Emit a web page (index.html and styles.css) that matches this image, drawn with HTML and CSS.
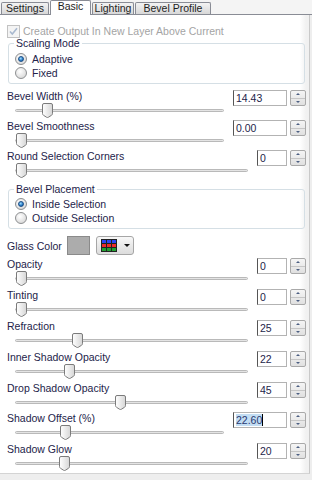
FILE: index.html
```html
<!DOCTYPE html>
<html lang="en">
<head>
<meta charset="UTF-8">
<meta name="viewport" content="width=device-width, initial-scale=1.0">
<title>Glass Bevel</title>
<link rel="stylesheet" href="styles.css">
</head>
<body>
    <svg class="defs" width="0" height="0">
        <defs>
            <linearGradient id="thumbFill" x1="0" y1="0" x2="1" y2="0">
                <stop offset="0" stop-color="#ffffff"/>
                <stop offset="1" stop-color="#d6d6d6"/>
            </linearGradient>
            <symbol id="thumb" viewBox="0 0 11 15">
                <path d="M0.5 2 Q0.5 0.5 2 0.5 H9 Q10.5 0.5 10.5 2 V10.5 Q10.5 11.5 9.5 12.3 L6.3 14.3 Q5.5 14.7 4.7 14.3 L1.5 12.3 Q0.5 11.5 0.5 10.5 Z" fill="url(#thumbFill)" stroke="#7b7b7b"/>
            </symbol>
        </defs>
    </svg>

    <div class="tabs">
        <div class="tab t-settings">Settings</div>
        <div class="tab t-basic active">Basic</div>
        <div class="tab t-lighting">Lighting</div>
        <div class="tab t-profile">Bevel Profile</div>
    </div>

    <div class="panel">
        <div class="check-row">
            <svg class="check" width="13" height="13" viewBox="0 0 13 13">
                <rect x="0.5" y="0.5" width="12" height="12" fill="#f4f4f4" stroke="#c2c2c2"/>
                <path d="M3 6.5 L5.3 9 L10 3.3" fill="none" stroke="#a9b9cf" stroke-width="1.6"/>
            </svg>
            <span>Create Output In New Layer Above Current</span>
        </div>

        <fieldset class="group">
            <legend>Scaling Mode</legend>
            <div class="radio-row"><span class="radio on"></span>Adaptive</div>
            <div class="radio-row"><span class="radio"></span>Fixed</div>
        </fieldset>

        <div class="param">
            <div class="param-main">
                <div class="label">Bevel Width (%)</div>
                <div class="slider"><div class="track"></div><svg class="thumb" style="left:27px"><use href="#thumb"/></svg></div>
            </div>
            <div class="value">
                <div class="field wide">14.43</div>
                <div class="spin"><span class="up"></span><span class="down"></span></div>
            </div>
        </div>

        <div class="param">
            <div class="param-main">
                <div class="label">Bevel Smoothness</div>
                <div class="slider"><div class="track"></div><svg class="thumb" style="left:1px"><use href="#thumb"/></svg></div>
            </div>
            <div class="value">
                <div class="field wide">0.00</div>
                <div class="spin"><span class="up"></span><span class="down"></span></div>
            </div>
        </div>

        <div class="param">
            <div class="param-main">
                <div class="label">Round Selection Corners</div>
                <div class="slider"><div class="track"></div><svg class="thumb" style="left:1px"><use href="#thumb"/></svg></div>
            </div>
            <div class="value">
                <div class="field">0</div>
                <div class="spin"><span class="up"></span><span class="down"></span></div>
            </div>
        </div>

        <fieldset class="group placement">
            <legend>Bevel Placement</legend>
            <div class="radio-row"><span class="radio on"></span>Inside Selection</div>
            <div class="radio-row"><span class="radio"></span>Outside Selection</div>
        </fieldset>

        <div class="glass">
            <span class="glass-label">Glass Color</span>
            <div class="swatch"></div>
            <div class="dropdown">
                <svg width="16" height="13" viewBox="0 0 16 13">
                    <rect x="0" y="0" width="16" height="13" fill="#222"/>
                    <rect x="1" y="1" width="4" height="3" fill="#2b43f0"/>
                    <rect x="6" y="1" width="4" height="3" fill="#2b43f0"/>
                    <rect x="11" y="1" width="4" height="3" fill="#2b43f0"/>
                    <rect x="1" y="5" width="4" height="3" fill="#ee2a2a"/>
                    <rect x="6" y="5" width="4" height="3" fill="#ee2a2a"/>
                    <rect x="11" y="5" width="4" height="3" fill="#ee2a2a"/>
                    <rect x="1" y="9" width="4" height="3" fill="#20a030"/>
                    <rect x="6" y="9" width="4" height="3" fill="#20a030"/>
                    <rect x="11" y="9" width="4" height="3" fill="#20a030"/>
                </svg>
                <span class="arrow"></span>
            </div>
        </div>

        <div class="param tall first">
            <div class="param-main">
                <div class="label">Opacity</div>
                <div class="slider"><div class="track"></div><svg class="thumb" style="left:1px"><use href="#thumb"/></svg></div>
            </div>
            <div class="value">
                <div class="field">0</div>
                <div class="spin"><span class="up"></span><span class="down"></span></div>
            </div>
        </div>

        <div class="param tall">
            <div class="param-main">
                <div class="label">Tinting</div>
                <div class="slider"><div class="track"></div><svg class="thumb" style="left:1px"><use href="#thumb"/></svg></div>
            </div>
            <div class="value">
                <div class="field">0</div>
                <div class="spin"><span class="up"></span><span class="down"></span></div>
            </div>
        </div>

        <div class="param tall">
            <div class="param-main">
                <div class="label">Refraction</div>
                <div class="slider"><div class="track"></div><svg class="thumb" style="left:57px"><use href="#thumb"/></svg></div>
            </div>
            <div class="value">
                <div class="field">25</div>
                <div class="spin"><span class="up"></span><span class="down"></span></div>
            </div>
        </div>

        <div class="param tall">
            <div class="param-main">
                <div class="label">Inner Shadow Opacity</div>
                <div class="slider"><div class="track"></div><svg class="thumb" style="left:49px"><use href="#thumb"/></svg></div>
            </div>
            <div class="value">
                <div class="field">22</div>
                <div class="spin"><span class="up"></span><span class="down"></span></div>
            </div>
        </div>

        <div class="param">
            <div class="param-main">
                <div class="label">Drop Shadow Opacity</div>
                <div class="slider"><div class="track"></div><svg class="thumb" style="left:100px"><use href="#thumb"/></svg></div>
            </div>
            <div class="value">
                <div class="field">45</div>
                <div class="spin"><span class="up"></span><span class="down"></span></div>
            </div>
        </div>

        <div class="param tall">
            <div class="param-main">
                <div class="label">Shadow Offset (%)</div>
                <div class="slider"><div class="track"></div><svg class="thumb" style="left:45px"><use href="#thumb"/></svg></div>
            </div>
            <div class="value">
                <div class="field wide"><span class="sel">22.60</span><span class="caret"></span></div>
                <div class="spin"><span class="up"></span><span class="down"></span></div>
            </div>
        </div>

        <div class="param tall">
            <div class="param-main">
                <div class="label">Shadow Glow</div>
                <div class="slider"><div class="track"></div><svg class="thumb" style="left:44px"><use href="#thumb"/></svg></div>
            </div>
            <div class="value">
                <div class="field">20</div>
                <div class="spin"><span class="up"></span><span class="down"></span></div>
            </div>
        </div>
    </div>
</body>
</html>
```

FILE: styles.css
```css
body {
    margin: 0;
    width: 312px;
    height: 480px;
    overflow: hidden;
    background: #eeeeee;
    font-family: "Liberation Sans", Arial, sans-serif;
    font-size: 10.5px;
    color: #23234a;
}

.defs {
    position: absolute;
    width: 0;
    height: 0;
}

/* tab strip */
.tabs {
    display: flex;
    align-items: flex-end;
    height: 14px;
    padding-left: 1px;
    border-bottom: 1px solid #898c95;
    background: #f4f4f4;
}

.tab {
    box-sizing: border-box;
    height: 12px;
    line-height: 11px;
    margin-right: 1px;
    text-align: center;
    color: #1e1e1e;
    border: 1px solid #898c95;
    border-bottom: 0;
    border-radius: 2px 2px 0 0;
    background: linear-gradient(#f3f3f3, #e5e5e5 50%, #d8d8d8);
}

.tab.active {
    height: 15px;
    margin-bottom: -1px;
    line-height: 11px;
    background: #ffffff;
    position: relative;
}

.t-settings { width: 48px; }
.t-basic { width: 41px; }
.t-lighting { width: 42px; }
.t-profile { width: 76px; }

/* panel */
.panel {
    box-sizing: border-box;
    width: 310px;
    height: 459px;
    padding: 9px 3px 0 7px;
    border-right: 1px solid #c9c9c9;
    border-bottom: 1px solid #d4d4d4;
    background: linear-gradient(to right, #ffffff 300px, #f1f1f1 306px);
}

.check-row {
    display: flex;
    align-items: center;
    gap: 3px;
    height: 13px;
    color: #a4a4a4;
}

.check {
    margin-top: 2px;
}

.group {
    margin: 0 1px 6px 1px;
    padding: 2px 6px 3px 6px;
    border: 1px solid #d5dfe5;
    border-radius: 3px;
}

.group legend {
    padding: 0 2px;
    margin-left: -1px;
    line-height: 13px;
}

.placement {
    margin-top: 3px;
    margin-bottom: 0;
    padding-top: 1px;
}

.radio-row {
    display: flex;
    align-items: center;
    gap: 5px;
    height: 14px;
}

.radio {
    box-sizing: border-box;
    width: 12px;
    height: 12px;
    border-radius: 50%;
    border: 1px solid #8d8f91;
    background: radial-gradient(circle at 40% 35%, #ffffff, #d9d9d9 80%);
    display: flex;
    align-items: center;
    justify-content: center;
}

.radio.on::after {
    content: "";
    width: 6px;
    height: 6px;
    border-radius: 50%;
    border: 1px solid #1d4f86;
    background: radial-gradient(circle at 40% 35%, #9fdcff, #2a7cc6 60%, #13508e);
    box-sizing: border-box;
}

/* parameter rows */
.param {
    display: flex;
    height: 30px;
}

.param.tall {
    height: 31px;
}

.param-main {
    flex: 1;
    min-width: 0;
}

.label {
    height: 13px;
    line-height: 13px;
    white-space: nowrap;
}

.slider {
    position: relative;
    height: 16px;
    margin: 0 9px 0 8px;
    padding-top: 6px;
    box-sizing: border-box;
}

.track {
    height: 1px;
    border: 1px solid #b9b9b9;
    border-radius: 2px;
    background: #e4e4e4;
}

.thumb {
    position: absolute;
    top: 0;
    width: 11px;
    height: 15px;
}

.value {
    display: flex;
    gap: 3px;
    align-self: flex-start;
}

.field {
    box-sizing: border-box;
    width: 30px;
    height: 16px;
    padding-left: 2px;
    line-height: 14px;
    border: 1px solid #b3b3b3;
    border-left-color: #555555;
    background: #ffffff;
    color: #24244a;
    display: flex;
    align-items: center;
}

.field.wide {
    width: 54px;
}

.sel {
    background: #c2ddf3;
    color: #2a3a70;
    line-height: 12px;
}

.caret {
    width: 1px;
    height: 12px;
    background: #000000;
}

.spin {
    box-sizing: border-box;
    width: 16px;
    height: 16px;
    display: flex;
    flex-direction: column;
    border: 1px solid #a9a9a9;
    border-radius: 2px;
    background: linear-gradient(#f5f5f5, #e0e0e0);
}

.spin span {
    flex: 1;
    display: flex;
    align-items: center;
    justify-content: center;
}

.spin span + span {
    border-top: 1px solid #c6c6c6;
}

.spin .up::after {
    content: "";
    border-left: 2px solid transparent;
    border-right: 2px solid transparent;
    border-bottom: 2px solid #4c5f82;
}

.spin .down::after {
    content: "";
    border-left: 2px solid transparent;
    border-right: 2px solid transparent;
    border-top: 2px solid #4c5f82;
}

/* glass color row */
.glass {
    display: flex;
    align-items: center;
    height: 19px;
    margin-top: 7px;
}

.swatch {
    box-sizing: border-box;
    width: 23px;
    height: 19px;
    margin-left: 5px;
    border: 1px solid #8a8a8a;
    background: #acacac;
}

.dropdown {
    box-sizing: border-box;
    width: 38px;
    height: 19px;
    margin-left: 6px;
    padding-left: 4px;
    display: flex;
    align-items: center;
    gap: 7px;
    border: 1px solid #a6a6a6;
    border-radius: 3px;
    background: linear-gradient(#f8f8f8, #e9e9e9 50%, #dcdcdc);
}

.arrow {
    border-left: 3px solid transparent;
    border-right: 3px solid transparent;
    border-top: 3px solid #111111;
}

.param.first {
    margin-top: 3px;
}
```
